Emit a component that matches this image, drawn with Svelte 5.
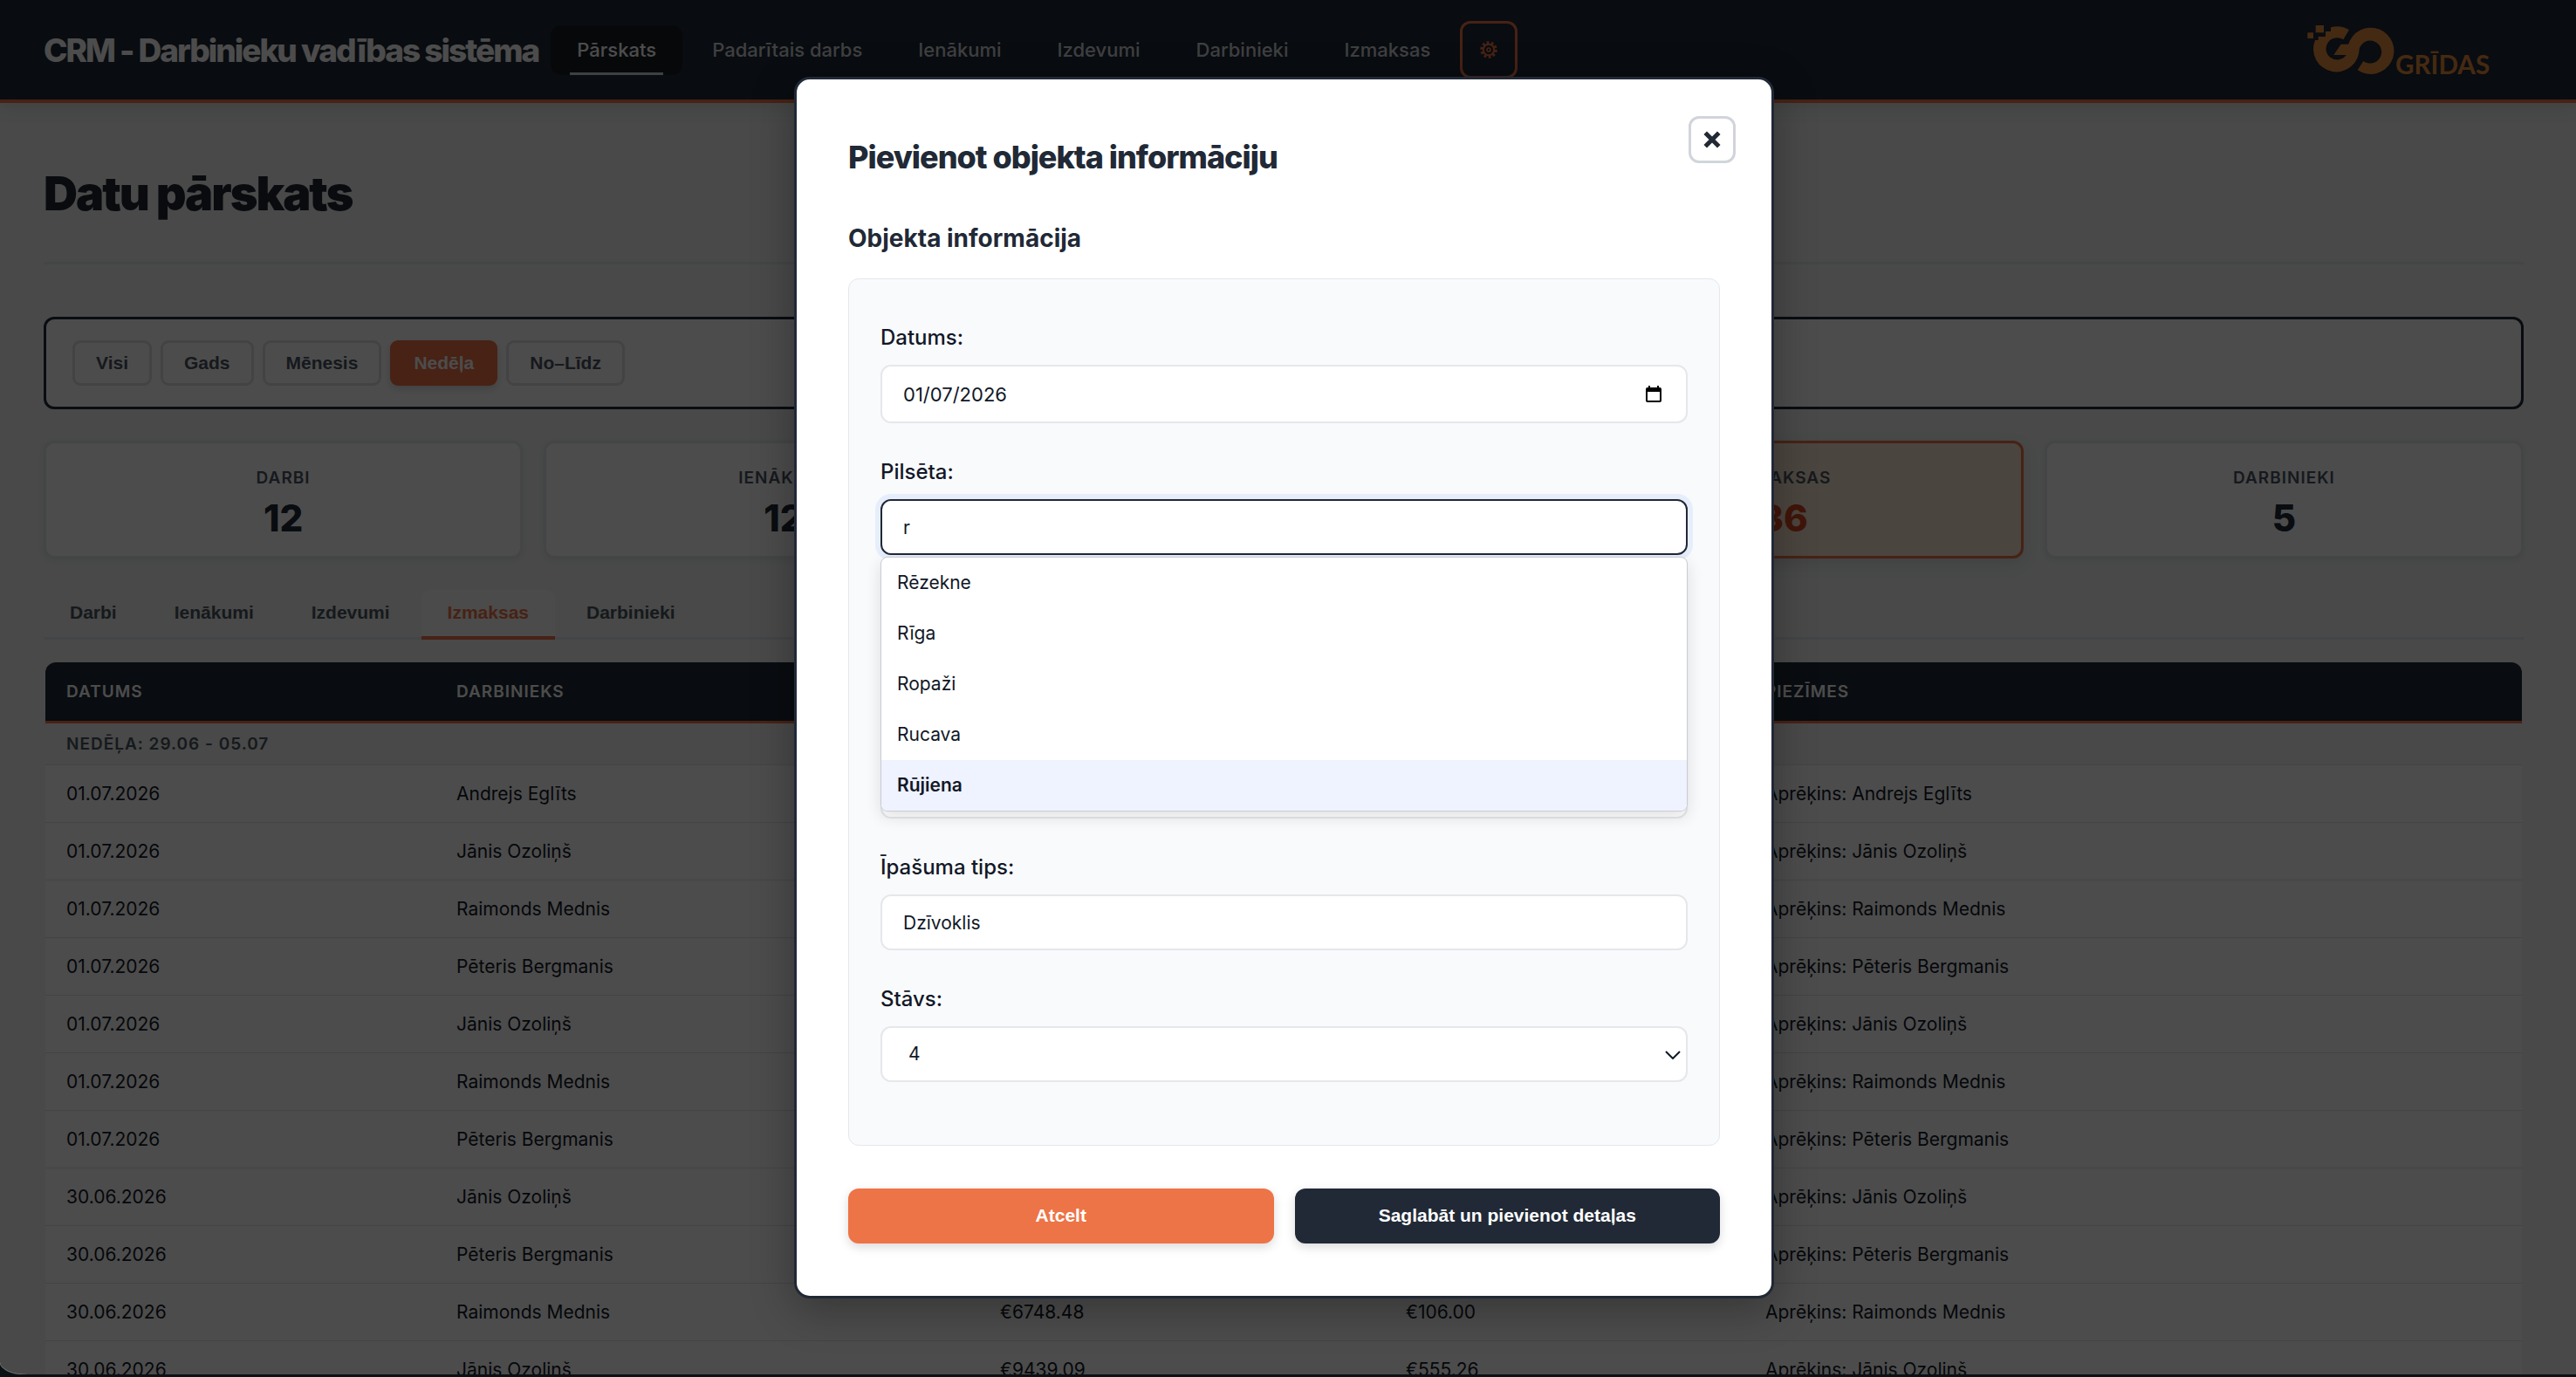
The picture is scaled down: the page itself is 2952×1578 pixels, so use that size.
<script lang="ts">
  const nav = ['Pārskats', 'Padarītais darbs', 'Ienākumi', 'Izdevumi', 'Darbinieki', 'Izmaksas'];
  const filters = ['Visi', 'Gads', 'Mēnesis', 'Nedēļa', 'No–Līdz'];
  const cards = [
    { label: 'Darbi', value: '12' },
    { label: 'Ienākumi', value: '12' },
    { label: 'Izdevumi', value: '12' },
    { label: 'Izmaksas', value: '36' },
    { label: 'Darbinieki', value: '5' }
  ];
  const tabs = ['Darbi', 'Ienākumi', 'Izdevumi', 'Izmaksas', 'Darbinieki'];
  const rows = [
    { date: '01.07.2026', name: 'Andrejs Eglīts', sum: '', tax: '' },
    { date: '01.07.2026', name: 'Jānis Ozoliņš', sum: '', tax: '' },
    { date: '01.07.2026', name: 'Raimonds Mednis', sum: '', tax: '' },
    { date: '01.07.2026', name: 'Pēteris Bergmanis', sum: '', tax: '' },
    { date: '01.07.2026', name: 'Jānis Ozoliņš', sum: '', tax: '' },
    { date: '01.07.2026', name: 'Raimonds Mednis', sum: '', tax: '' },
    { date: '01.07.2026', name: 'Pēteris Bergmanis', sum: '', tax: '' },
    { date: '30.06.2026', name: 'Jānis Ozoliņš', sum: '', tax: '' },
    { date: '30.06.2026', name: 'Pēteris Bergmanis', sum: '', tax: '' },
    { date: '30.06.2026', name: 'Raimonds Mednis', sum: '€6748.48', tax: '€106.00' },
    { date: '30.06.2026', name: 'Jānis Ozoliņš', sum: '€9439.09', tax: '€555.26' }
  ];
  const cities = ['Rēzekne', 'Rīga', 'Ropaži', 'Rucava', 'Rūjiena'];
</script>

<div class="window">
  <header>
    <span class="brand">CRM - Darbinieku vadības sistēma</span>
    <nav>
      {#each nav as item, i}
        <a href="#{i}" class:active={i === 0}>{item}</a>
      {/each}
    </nav>
    <button class="gear" aria-label="Iestatījumi">
      <svg viewBox="0 0 24 24" width="20" height="20">
        <g fill="none" stroke="currentColor">
          <circle cx="12" cy="12" r="7.5" stroke-width="2.6" />
          <circle cx="12" cy="12" r="10" stroke-width="3.6" stroke-dasharray="3.4 2.883" />
          <circle cx="12" cy="12" r="2.4" stroke-width="2" />
        </g>
      </svg>
    </button>
    <svg class="logo" viewBox="66 30 642 222" width="214" height="74" role="img" aria-label="GO Grīdas">
      <rect x="101" y="57" width="28" height="25" />
      <rect x="73" y="82" width="20" height="20" />
      <path d="M216 73 A79 79 0 0 0 153 64 V78 H135 V96 H110 V108 H99 A79 79 0 1 0 251 136 V122 H188 L163 159 H206 A38 38 0 1 1 196 106 Z" />
      <path d="M213 124 A80 80 0 1 1 245 211 L265 180 A39 39 0 1 0 251 138 L230 150 Z" />
      <text x="375" y="224">GRĪDAS</text>
    </svg>
  </header>

  <main>
    <h1>Datu pārskats</h1>
    <section class="filters">
      {#each filters as f, i}
        <button class:active={i === 3}>{f}</button>
      {/each}
    </section>
    <section class="cards">
      {#each cards as c, i}
        <div class="card" class:active={i === 3}>
          <span class="label">{c.label}</span>
          <span class="value">{c.value}</span>
        </div>
      {/each}
    </section>
    <div class="tabs">
      {#each tabs as t, i}
        <button class:active={i === 3}>{t}</button>
      {/each}
    </div>
    <div class="tablebox">
      <table>
        <colgroup><col class="c1" /><col class="c2" /><col class="c3" /><col class="c4" /><col /></colgroup>
        <thead>
          <tr><th>Datums</th><th>Darbinieks</th><th>Summa</th><th>Nodoklis</th><th>Piezīmes</th></tr>
        </thead>
        <tbody>
          <tr class="group"><td colspan="5">Nedēļa: 29.06 - 05.07</td></tr>
          {#each rows as r}
            <tr><td>{r.date}</td><td>{r.name}</td><td>{r.sum}</td><td>{r.tax}</td><td>Aprēķins: {r.name}</td></tr>
          {/each}
        </tbody>
      </table>
    </div>
  </main>

  <div class="overlay">
    <div class="modal" role="dialog" aria-labelledby="dlg-title">
      <button class="close" aria-label="Aizvērt">
        <svg viewBox="0 0 20 20" width="20" height="20"><path d="M4 4 L16 16 M16 4 L4 16" stroke="currentColor" stroke-width="5" stroke-linecap="square" /></svg>
      </button>
      <h2 id="dlg-title">Pievienot objekta informāciju</h2>
      <h3>Objekta informācija</h3>
      <form class="fields">
        <div class="field">
          <label for="date">Datums:</label>
          <div class="datewrap">
            <input class="date" id="date" type="text" value="01/07/2026" />
            <svg class="cal" viewBox="0 0 18 20" width="18" height="20">
              <path d="M0 4 a2 2 0 0 1 2 -2 H3 V0 H5 V2 H13 V0 H15 V2 H16 a2 2 0 0 1 2 2 V17 a2 2 0 0 1 -2 2 H2 a2 2 0 0 1 -2 -2 Z M2 7 V17 H16 V7 Z" fill-rule="evenodd" />
            </svg>
          </div>
        </div>
        <div class="field">
          <label for="city">Pilsēta:</label>
          <div class="combo">
            <input class="focus" id="city" type="text" value="r" />
            <ul>
              {#each cities as c, i}
                <li class:active={i === 4}>{c}</li>
              {/each}
            </ul>
          </div>
        </div>
        <div class="field bare">
          <input type="text" aria-label="Iela" />
        </div>
        <div class="field bare">
          <input type="text" aria-label="Māja" />
        </div>
        <div class="field">
          <label for="kind">Īpašuma tips:</label>
          <input id="kind" type="text" value="Dzīvoklis" />
        </div>
        <div class="field">
          <label for="floor">Stāvs:</label>
          <div class="selectwrap">
            <select id="floor"><option>4</option></select>
            <svg class="chev" viewBox="0 0 18 10" width="18" height="10"><path d="M1 1 L9 9 L17 1" fill="none" stroke="currentColor" stroke-width="2" /></svg>
          </div>
        </div>
      </form>
      <div class="actions">
        <button class="cancel">Atcelt</button>
        <button class="save">Saglabāt un pievienot detaļas</button>
      </div>
    </div>
  </div>
</div>

<style>
  :global(body) {
    background: #0a1216;
  }
  .window,
  .window * {
    box-sizing: border-box;
  }
  .window {
    position: relative;
    height: calc(100vh - 3px);
    overflow: hidden;
    border-bottom-left-radius: 32px 14px;
    box-shadow: 0 1px 0 #5c5c5c;
    background: #f0f5f1;
    color: #111827;
    font-family: Inter, 'Liberation Sans', sans-serif;
    font-size: 22px;
  }
  button,
  input,
  select {
    font-family: inherit;
    margin: 0;
  }
  header {
    display: flex;
    align-items: center;
    height: 118px;
    padding: 0 96px 0 50px;
    background: #212936;
    border-bottom: 4px solid #ed7446;
    box-shadow: 0 4px 20px rgba(0, 0, 0, 0.12);
  }
  .brand {
    font-size: 37px;
    font-weight: 800;
    letter-spacing: -2px;
    color: #fff;
    white-space: nowrap;
    margin-right: 14px;
  }
  nav {
    display: flex;
    gap: 4px;
  }
  nav a {
    position: relative;
    padding: 0 30px;
    line-height: 57px;
    font-size: 22px;
    font-weight: 500;
    color: #d1d5db;
    text-decoration: none;
    border-radius: 12px;
    white-space: nowrap;
  }
  nav a.active {
    color: #fff;
    background: #171b24;
  }
  nav a.active::after {
    content: '';
    position: absolute;
    left: 22px;
    right: 22px;
    bottom: 0;
    height: 3px;
    background: #d1d5db;
  }
  .gear {
    display: grid;
    place-items: center;
    width: 66px;
    height: 66px;
    margin-left: 4px;
    border: 3px solid #ed7446;
    border-radius: 12px;
    background: none;
    color: #ed7446;
  }
  .logo {
    margin-left: auto;
    fill: #e58c3c;
  }
  .logo text {
    font: 700 89px Lato, sans-serif;
  }
  main {
    padding: 0 60px 0 50px;
  }
  h1 {
    margin: 0;
    padding: 66px 0 40px;
    height: 185px;
    line-height: 76px;
    font-size: 54px;
    font-weight: 900;
    letter-spacing: -2px;
    color: #1f2531;
    border-bottom: 3px solid #e5e7eb;
  }
  .filters {
    display: flex;
    gap: 10px;
    margin-top: 60px;
    padding: 24px 30px;
    background: #fff;
    border: 3px solid #212936;
    border-radius: 12px;
  }
  .filters button {
    height: 52px;
    padding: 0 24px;
    font: 700 21px 'Liberation Sans', sans-serif;
    color: #4b5563;
    background: #fff;
    border: 3px solid #dfe1e5;
    border-radius: 9px;
  }
  .filters button.active {
    color: #fff;
    background: #ed7446;
    border-color: #ed7446;
    box-shadow: 0 4px 10px rgba(0, 0, 0, 0.15);
  }
  .cards {
    display: grid;
    grid-template-columns: repeat(5, 1fr);
    gap: 24px;
    margin-top: 36px;
  }
  .card {
    display: flex;
    flex-direction: column;
    align-items: center;
    height: 135px;
    padding-top: 26px;
    background: #fff;
    border: 3px solid #e5e7eb;
    border-radius: 12px;
    box-shadow: 0 2px 6px rgba(0, 0, 0, 0.06);
  }
  .label {
    line-height: 28px;
    font-size: 19px;
    font-weight: 600;
    letter-spacing: 1px;
    text-transform: uppercase;
    color: #4b5563;
  }
  .value {
    line-height: 64px;
    font-size: 42px;
    font-weight: 800;
    color: #212936;
  }
  .card.active {
    background: #fbe6d3;
    border-color: #ed7446;
    box-shadow: 0 6px 18px rgba(0, 0, 0, 0.1);
  }
  .card.active .value {
    color: #d9481f;
  }
  .tabs {
    display: flex;
    gap: 6px;
    margin-top: 36px;
    border-bottom: 3px solid #e5e7eb;
  }
  .tabs button {
    height: 57px;
    margin-bottom: -3px;
    padding: 0 30px 2px;
    font: 700 21px 'Liberation Sans', sans-serif;
    color: #4b5563;
    background: none;
    border: 0;
    border-bottom: 4px solid transparent;
  }
  .tabs button.active {
    color: #ed7446;
    background: #fbfbfb;
    border-bottom-color: #ed7446;
    border-radius: 9px 9px 0 0;
  }
  .tablebox {
    margin: 26px 2px 0;
    border-radius: 12px 12px 0 0;
    overflow: hidden;
    background: #fff;
  }
  table {
    width: 100%;
    table-layout: fixed;
    border-collapse: separate;
    border-spacing: 0;
  }
  .c1 { width: 447px; }
  .c2 { width: 623px; }
  .c3 { width: 465px; }
  .c4 { width: 412px; }
  th {
    height: 70px;
    padding: 0 24px;
    text-align: left;
    font-size: 19px;
    font-weight: 600;
    letter-spacing: 1px;
    text-transform: uppercase;
    color: #fff;
    background: #212936;
    border-bottom: 3px solid #ed7446;
  }
  td {
    height: 66px;
    padding: 0 24px;
    font-size: 21px;
    border-bottom: 1px solid #e0e3e6;
  }
  .group td {
    height: 48px;
    font-size: 19px;
    font-weight: 600;
    letter-spacing: 1px;
    text-transform: uppercase;
    color: #4b5563;
    background: #f0f5f1;
  }
  .overlay {
    position: absolute;
    inset: 0;
    display: flex;
    align-items: center;
    justify-content: center;
    padding-right: 9px;
    background: rgba(0, 0, 0, 0.7);
  }
  .modal {
    position: relative;
    width: 1123px;
    max-width: 100%;
    padding: 59px 59px 60px;
    background: #fff;
    border: 3px solid #212936;
    border-radius: 18px;
    box-shadow: 0 12px 50px rgba(0, 0, 0, 0.3);
  }
  .close {
    position: absolute;
    top: 42px;
    right: 41px;
    display: grid;
    place-items: center;
    width: 54px;
    height: 54px;
    padding: 0;
    border: 3px solid #d1d5db;
    border-radius: 12px;
    background: #fff;
    color: #212936;
  }
  h2 {
    margin: 0;
    line-height: 60px;
    font-size: 36px;
    font-weight: 800;
    letter-spacing: -1px;
    color: #212936;
  }
  h3 {
    margin: 43px 0 25px;
    line-height: 41px;
    font-size: 28px;
    font-weight: 700;
    color: #212936;
  }
  .fields {
    display: flex;
    flex-direction: column;
    gap: 38px;
    padding: 49px 36px 72px;
    background: #f9fafc;
    border: 1px solid #e5e7eb;
    border-radius: 12px;
  }
  .field {
    display: flex;
    flex-direction: column;
    gap: 13px;
  }
  .field.bare {
    padding-top: 49px;
  }
  label {
    line-height: 36px;
    font-size: 24px;
    font-weight: 500;
  }
  input,
  select {
    display: block;
    width: 100%;
    height: 64px;
    padding: 2px 24px 0;
    font-size: 21px;
    color: #111827;
    background: #fff;
    border: 2px solid #e5e7eb;
    border-radius: 12px;
    outline: none;
  }
  input.date {
    height: 67px;
    font-size: 22px;
  }
  .datewrap,
  .combo,
  .selectwrap {
    position: relative;
  }
  .cal {
    position: absolute;
    right: 30px;
    top: 24px;
  }
  input.focus {
    border-color: #212936;
    box-shadow: 0 0 0 6px #e6eefb;
  }
  ul {
    position: absolute;
    z-index: 2;
    top: 66px;
    left: 0;
    right: 0;
    margin: 0;
    padding: 0;
    list-style: none;
    background: #fff;
    border: 1px solid #c9ccd4;
    border-radius: 8px;
    overflow: hidden;
    box-shadow: 0 6px 18px rgba(0, 0, 0, 0.12);
  }
  li {
    padding: 0 18px;
    line-height: 58px;
    font-size: 21px;
  }
  li.active {
    background: #eff2ff;
    font-weight: 600;
  }
  select {
    appearance: none;
    padding: 0 30px;
  }
  .chev {
    position: absolute;
    right: 8px;
    top: 28px;
  }
  .actions {
    display: grid;
    grid-template-columns: 1fr 1fr;
    gap: 24px;
    margin-top: 49px;
  }
  .actions button {
    height: 63px;
    border: 0;
    border-radius: 12px;
    font: 700 21px 'Liberation Sans', sans-serif;
    color: #fff;
    box-shadow: 0 4px 12px rgba(0, 0, 0, 0.15);
  }
  .actions .cancel {
    background: #ed7446;
  }
  .actions .save {
    background: #212936;
  }
</style>
